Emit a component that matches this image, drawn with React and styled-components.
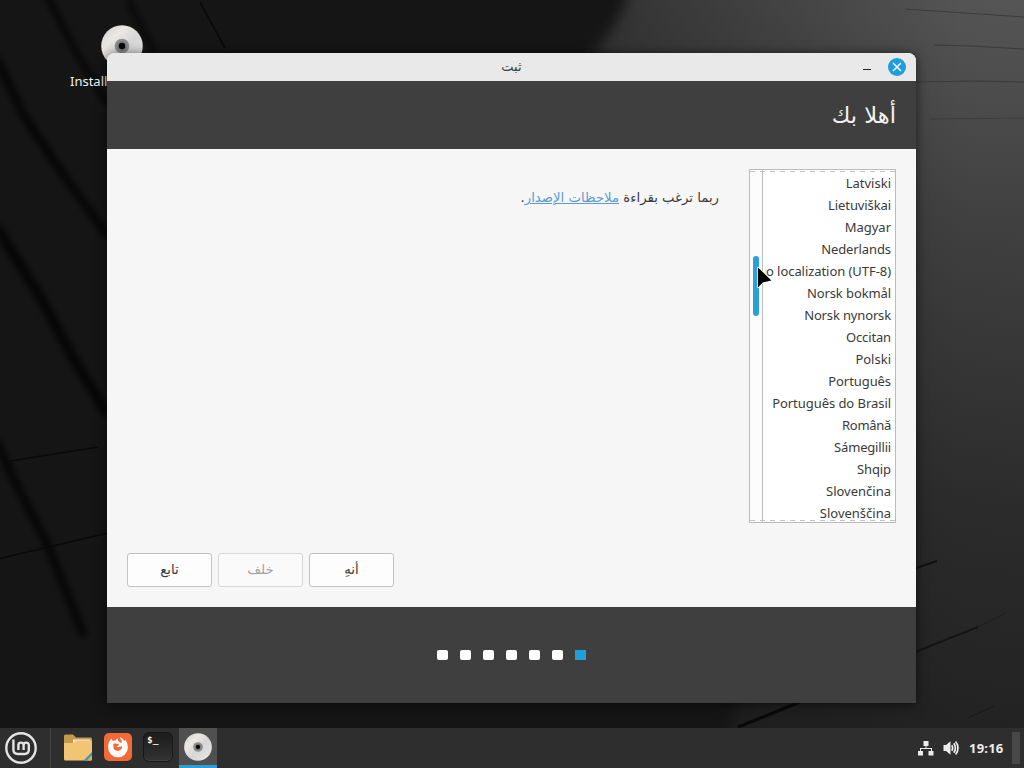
import React from 'react';
import styled, {createGlobalStyle} from 'styled-components';

const languages = [
    {name: 'Latviski'},
    {name: 'Lietuviškai', spacing: -0.1},
    {name: 'Magyar'},
    {name: 'Nederlands', spacing: -0.1},
    {name: 'No localization (UTF-8)', spacing: -0.06},
    {name: 'Norsk bokmål', spacing: -0.1},
    {name: 'Norsk nynorsk', spacing: -0.15},
    {name: 'Occitan', spacing: -0.15},
    {name: 'Polski'},
    {name: 'Português', spacing: -0.08},
    {name: 'Português do Brasil', spacing: -0.05},
    {name: 'Română', spacing: -0.3},
    {name: 'Sámegillii', spacing: -0.18},
    {name: 'Shqip', spacing: -0.1},
    {name: 'Slovenčina'},
    {name: 'Slovenščina'},
];

const STEPS = 7;

const Wallpaper = () => (
    <WallpaperSvg viewBox="0 0 1024 768" preserveAspectRatio="none">
        <defs>
            <linearGradient id="slope" x1="1" y1="0" x2="0.82" y2="1">
                <stop offset="0" stopColor="#555"/>
                <stop offset="0.3" stopColor="#3f3f3f"/>
                <stop offset="0.65" stopColor="#2b2b2b"/>
                <stop offset="1" stopColor="#202020"/>
            </linearGradient>
            <linearGradient id="fade" x1="590" y1="0" x2="960" y2="0" gradientUnits="userSpaceOnUse">
                <stop offset="0" stopColor="#151515" stopOpacity="0.5"/>
                <stop offset="1" stopColor="#151515" stopOpacity="0"/>
            </linearGradient>
            <filter id="soft" filterUnits="userSpaceOnUse" x="-60" y="-60" width="300" height="860">
                <feGaussianBlur stdDeviation="3.2"/>
            </filter>
            <filter id="edge" filterUnits="userSpaceOnUse" x="-100" y="-100" width="1000" height="1000" colorInterpolationFilters="sRGB">
                <feGaussianBlur stdDeviation="7"/>
            </filter>
        </defs>
        <rect width="1024" height="768" fill="url(#slope)"/>
        <rect x="590" width="434" height="768" fill="url(#fade)"/>
        <path d="M-60 -60H640Q634 8 596 50L560 600L740 700L690 820H-60Z" fill="#151515" filter="url(#edge)"/>
        <g stroke="#050505" strokeOpacity="0.75" fill="none" filter="url(#soft)">
            <path d="M46 -6L75 50L108 105" strokeWidth="6"/>
            <path d="M128 0L154 52" strokeWidth="5"/>
            <path d="M-4 58L24 116L60 170L108 236" strokeWidth="8"/>
            <path d="M-4 226L42 300L72 356L108 415" strokeWidth="10"/>
            <path d="M-4 440L14 480L48 546L84 636" strokeWidth="8"/>
        </g>
        <g stroke="#090909" strokeWidth="1.6" fill="none">
            <path d="M200 2L225 48"/>
            <path d="M10 461L98 447"/>
            <path d="M-2 559L108 533"/>
            <path d="M738 727L800 702" strokeWidth="3"/>
        </g>
        <g fill="none" stroke="#111">
            <path d="M916 568L937 561" strokeWidth="2"/>
            <path d="M916 652L930 646L978 627" strokeWidth="2" strokeOpacity="0.8"/>
            <path d="M978 627L1006 613" strokeOpacity="0.4"/>
            <path d="M968 718L994 706" strokeOpacity="0.6"/>
        </g>
        <g fill="none" stroke="#2a2a2a" strokeOpacity="0.55">
            <path d="M905 9L950 12L1024 17"/>
            <path d="M934 45L970 46L1024 49"/>
            <path d="M916 82L975 81L1024 82"/>
            <path d="M930 119L1024 118" strokeOpacity="0.4"/>
        </g>
    </WallpaperSvg>
);

const Disc = ({size}) => (
    <svg width={size} height={size} viewBox="0 0 42 42">
        <defs>
            <linearGradient id={`disc${size}`} x1="0" y1="0" x2="1" y2="1">
                <stop offset="0" stopColor="#cfcfcf"/>
                <stop offset="0.3" stopColor="#ebe9e4"/>
                <stop offset="0.55" stopColor="#d6d6d6"/>
                <stop offset="1" stopColor="#e9e9e9"/>
            </linearGradient>
        </defs>
        <circle cx="21" cy="21" r="20.8" fill={`url(#disc${size})`}/>
        <circle cx="21" cy="21" r="7.3" fill="#8f8f8f"/>
        <circle cx="21" cy="21" r="5" fill="#7c7c7c"/>
        <circle cx="21" cy="21" r="3.2" fill="#080808"/>
    </svg>
);

const MintLogo = () => (
    <svg width="32" height="32" viewBox="0 0 32 32" fill="none" stroke="#e4e4e4">
        <circle cx="16" cy="16" r="14.7" strokeWidth="2.4"/>
        <path d="M8.4 7.6V17.6Q8.4 22 12.8 22H19.6Q23.8 22 23.8 17.8V13.2A2.6 2.6 0 0 0 18.6 13.2V18M18.6 13.2A2.6 2.6 0 0 0 13.4 13.2V18" strokeWidth="2.4"/>
    </svg>
);

const FolderIcon = () => (
    <svg width="29" height="27" viewBox="0 0 29 27">
        <path d="M0 2Q0 0.5 1.5 0.5H9L12 3.5H26.5Q28 3.5 28 5V14H0Z" fill="#c49a4d"/>
        <path d="M9 5.5H26V12H9Z" fill="#f3eee0"/>
        <path d="M0 9H9L12 6.5H28V25Q28 26.5 26.5 26.5H1.5Q0 26.5 0 25Z" fill="#f2c574"/>
        <path d="M28 18V21.5L23 26.5H19.5Z" fill="#4795a6"/>
        <path d="M28 21.5V25Q28 26.5 26.5 26.5H23Z" fill="#d9ac60"/>
    </svg>
);

const FirefoxIcon = () => (
    <svg width="28" height="28" viewBox="0 0 28 28">
        <rect width="28" height="28" rx="5" fill="#f46a37"/>
        <path d="M7.4 5.4L8.8 8Q10.2 7.2 11.4 7.6Q12.2 6 14 5.6Q13.2 7.6 14.8 8.6L17.6 10.2Q18.2 8 15.6 4Q18.8 5 20.2 8L21.2 6.6Q24 10 23.9 14.4A9.9 9.9 0 0 1 4.1 14.4Q4 9 7.4 5.4Z" fill="#fff"/>
        <path d="M9.4 10.6L11.6 10.4L15.2 11.4Q14.6 12.8 12.4 13.2Q13.6 14.8 16.6 13.6Q17.6 13.2 18.2 13.8Q17.4 17.8 13.8 18Q9.6 17.8 9.4 13.8Z" fill="#f46a37"/>
    </svg>
);

const TerminalIcon = () => (
    <Terminal>$_</Terminal>
);

const NetworkIcon = () => (
    <svg width="16" height="16" viewBox="0 0 16 16" fill="#ececec">
        <path d="M5.5 1H10.5V6H8.5V8H14V11H15.5V15.5H10.5V11H13V9H3V11H5V15.5H0V11H2V8H7.5V6H5.5Z"/>
    </svg>
);

const VolumeIcon = () => (
    <svg width="17" height="16" viewBox="0 0 17 16">
        <path d="M0.5 5H3L7.5 1.2V14.8L3 11H0.5Z" fill="#ececec"/>
        <g fill="none" stroke="#ececec" strokeWidth="1.7">
            <path d="M8.8 5.2Q10.6 8 8.8 10.8"/>
            <path d="M10.8 3.2Q14 8 10.8 12.8"/>
            <path d="M12.6 1.4Q17.4 8 12.6 14.6"/>
        </g>
    </svg>
);

const Pointer = () => (
    <PointerSvg width="18" height="26" viewBox="0 0 18 26">
        <path d="M2 2.4V22.6L6.8 17.4L15.4 15.6Z" fill="#000" stroke="#fff" strokeWidth="1.4" strokeLinejoin="round" paintOrder="stroke"/>
    </PointerSvg>
);

const LanguageList = ({items = []}) => (
    <ListBox>
        <Items>
            {items.map((item) =>
                <Item key={item.name}>
                    <ItemName dir="ltr" $spacing={item.spacing}>{item.name}</ItemName>
                </Item>
            )}
        </Items>
        <Track>
            <Thumb/>
        </Track>
        <Pointer/>
    </ListBox>
);

const InstallerWindow = () => (
    <Window dir="rtl">
        <TitleBar>
            <Controls>
                <CloseButton>
                    <svg width="10" height="10" viewBox="0 0 10 10" stroke="#fff" strokeWidth="1.5">
                        <path d="M1 1L9 9M9 1L1 9"/>
                    </svg>
                </CloseButton>
                <Minimize/>
            </Controls>
            <Title>ثبت</Title>
        </TitleBar>
        <Header>أهلا بك</Header>
        <Content>
            <Columns>
                <LanguageList items={languages}/>
                <Notes>ربما ترغب بقراءة <NotesLink>ملاحظات الإصدار</NotesLink>.</Notes>
            </Columns>
            <Actions>
                <Button>أنهِ</Button>
                <Button $muted>خلف</Button>
                <Button>تابع</Button>
            </Actions>
        </Content>
        <Footer>
            {Array.from({length: STEPS}, (_, index) =>
                <Step key={index} $current={index === 0}/>
            )}
        </Footer>
    </Window>
);

const App = () => {
    return (
        <Desktop>
            <GlobalStyle/>
            <Wallpaper/>
            <Workspace>
                <Launcher>
                    <Disc size={42}/>
                    <LauncherName>Install Linux Mint</LauncherName>
                </Launcher>
                <InstallerWindow/>
            </Workspace>
            <Taskbar>
                <MenuButton><MintLogo/></MenuButton>
                <Task><FolderIcon/></Task>
                <Task><FirefoxIcon/></Task>
                <Task><TerminalIcon/></Task>
                <Task $active><Disc size={28}/></Task>
                <Tray>
                    <NetworkIcon/>
                    <VolumeIcon/>
                    <Clock>19:16</Clock>
                    <Grip/>
                </Tray>
            </Taskbar>
        </Desktop>
    )
}

const GlobalStyle = createGlobalStyle`
  * {
    box-sizing: border-box;
  }

  body {
    margin: 0;
    overflow: hidden;
    font-family: "Noto Sans", "DejaVu Sans", sans-serif;
    font-size: 13px;
    color: #3a3a3a;
  }

  svg {
    display: block;
    flex-shrink: 0;
  }
`;

const Desktop = styled.div`
  position: relative;
  display: flex;
  flex-direction: column;
  width: 1024px;
  height: 768px;
  overflow: hidden;
  background: #151515;
`;

const WallpaperSvg = styled.svg`
  position: absolute;
  width: 100%;
  height: 100%;
`;

const Workspace = styled.div`
  position: relative;
  flex: 1;
`;

const Launcher = styled.div`
  position: absolute;
  top: 25px;
  left: 62px;
  width: 120px;
  display: flex;
  flex-direction: column;
  align-items: center;
  gap: 5px;
`;

const LauncherName = styled.div`
  width: 104px;
  white-space: nowrap;
  line-height: 18px;
  color: #f0f0f0;
`;

const Window = styled.div`
  position: absolute;
  top: 53px;
  left: 107px;
  width: 809px;
  height: 650px;
  display: flex;
  flex-direction: column;
  overflow: hidden;
  border-radius: 8px 8px 0 0;
  background: #f6f6f6;
  box-shadow: 0 1px 12px rgba(0, 0, 0, 0.6);
`;

const TitleBar = styled.div`
  display: grid;
  grid-template-columns: 1fr auto 1fr;
  align-items: center;
  height: 28px;
  background: #e9e9e9;
`;

const Title = styled.div`
  font-family: "DejaVu Sans", sans-serif;
  font-size: 13px;
  line-height: 28px;
`;

const Controls = styled.div`
  display: flex;
  align-items: center;
  gap: 17px;
  padding-right: 10px;
`;

const CloseButton = styled.div`
  display: flex;
  align-items: center;
  justify-content: center;
  width: 18px;
  height: 18px;
  border-radius: 50%;
  background: #1f9ede;
`;

const Minimize = styled.div`
  width: 8px;
  height: 1px;
  margin-top: 4px;
  background: #222;
`;

const Header = styled.div`
  height: 68px;
  padding: 0 20px;
  background: #3f3f3f;
  color: #f2f2f2;
  font-family: "DejaVu Sans", sans-serif;
  font-size: 22.6px;
  line-height: 68px;
`;

const Content = styled.div`
  flex: 1;
  display: flex;
  flex-direction: column;
  justify-content: space-between;
  padding: 20px;
`;

const Columns = styled.div`
  display: flex;
  gap: 30px;
`;

const ListBox = styled.div`
  position: relative;
  display: flex;
  width: 147px;
  height: 354px;
  border: 1px solid #bcbcbc;
  background: #fff;

  &::before,
  &::after {
    content: '';
    position: absolute;
    left: 0;
    right: 0;
    height: 1px;
    background: repeating-linear-gradient(90deg, #c4c4c4 0 5px, transparent 5px 10px);
  }

  &::before {
    top: 1px;
  }

  &::after {
    bottom: 1px;
  }
`;

const Items = styled.div`
  flex: 1;
  min-width: 0;
  margin-left: 2px;
  padding-top: 2px;
  overflow: hidden;
`;

const Item = styled.div`
  display: flex;
  height: 22px;
  padding-right: 4px;
  line-height: 22px;
`;

const ItemName = styled.span`
  white-space: nowrap;
  letter-spacing: ${({$spacing = 0}) => $spacing}px;
`;

const Track = styled.div`
  width: 13px;
  padding: 86px 3px 0;
  border-right: 1px solid #bcbcbc;
  background: #fcfcfc;
`;

const Thumb = styled.div`
  width: 6px;
  height: 60px;
  border-radius: 3px;
  background: #2a9fd8;
`;

const PointerSvg = styled.svg`
  position: absolute;
  top: 95px;
  left: 6px;
`;

const Notes = styled.div`
  padding-top: 19px;
  font-family: "DejaVu Sans", sans-serif;
  font-size: 13.25px;
  line-height: 20px;
`;

const NotesLink = styled.span`
  color: #5c9bd1;
  text-decoration: underline;
`;

const Actions = styled.div`
  display: flex;
  justify-content: flex-end;
  gap: 6px;
`;

const Button = styled.button`
  width: 85px;
  height: 34px;
  padding: 0 0 2px;
  border: 1px solid ${({$muted}) => $muted ? '#d8d8d8' : '#c2c2c2'};
  border-radius: 3px;
  background: ${({$muted}) => $muted ? '#fafafa' : '#fdfdfd'};
  color: ${({$muted}) => $muted ? '#a2a2a2' : '#3a3a3a'};
  font-family: "DejaVu Sans", sans-serif;
  font-size: 13.3px;
`;

const Footer = styled.div`
  display: flex;
  align-items: center;
  justify-content: center;
  gap: 12px;
  height: 96px;
  background: #3f3f3f;
`;

const Step = styled.div`
  width: 11px;
  height: 10px;
  border-radius: ${({$current}) => $current ? 0 : 2}px;
  background: ${({$current}) => $current ? '#229fd9' : '#fff'};
`;

const Taskbar = styled.div`
  position: relative;
  display: flex;
  height: 40px;
  background: #2e2e2e;
`;

const MenuButton = styled.div`
  display: flex;
  align-items: center;
  width: 51px;
  margin-right: 8px;
  padding-left: 5px;
  border-right: 1px solid #444;
`;

const Task = styled.div`
  display: flex;
  align-items: center;
  justify-content: center;
  width: 38px;
  margin-right: 2px;
  padding-bottom: 2px;
  background: ${({$active}) => $active ? '#505050' : 'transparent'};
  box-shadow: ${({$active}) => $active ? 'inset 0 -3px #2a9fd8' : 'none'};
`;

const Terminal = styled.div`
  width: 30px;
  height: 30px;
  padding-left: 3px;
  border: 1px solid #171717;
  border-radius: 6px;
  background: linear-gradient(#1c1c1c, #333);
  box-shadow: inset 0 -1px #414141;
  color: #f0f0f0;
  font-family: "DejaVu Sans Mono", monospace;
  font-size: 9.5px;
  font-weight: bold;
  line-height: 13px;
`;

const Tray = styled.div`
  display: flex;
  align-items: center;
  margin-left: auto;
  padding-right: 4px;
  gap: 9px;
`;

const Clock = styled.div`
  width: 34px;
  font-weight: bold;
  letter-spacing: 0.2px;
  color: #ececec;
`;

const Grip = styled.div`
  width: 8px;
  height: 32px;
  background: #484848;
`;

export default App;
